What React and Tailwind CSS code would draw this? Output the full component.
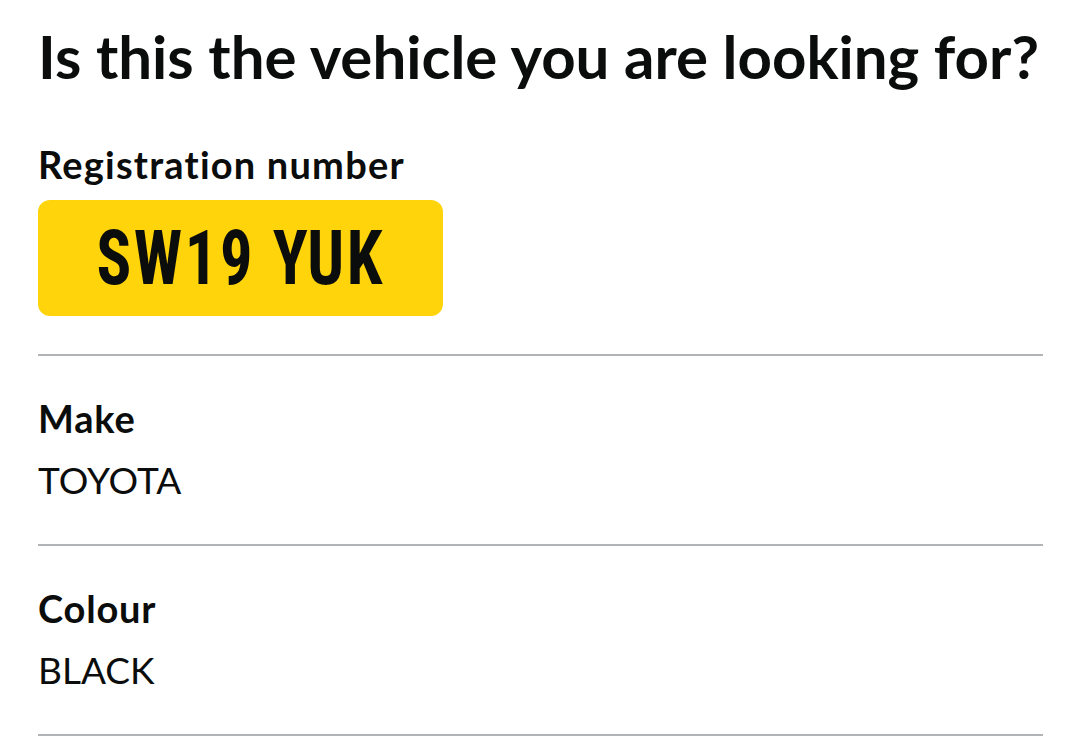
import React from "react";

const rows = [
    { label: "Make", value: "TOYOTA" },
    { label: "Colour", value: "BLACK" },
];

export default function App() {
    return (
        <div className="min-h-[745px] bg-white text-[#0b0c0c] font-['Lato',sans-serif] [font-variant-ligatures:none]">
            <div className="ml-[38px] w-[1005px] pt-[19px]">
                <h1 className="text-[60px] font-bold leading-[74px] whitespace-nowrap">
                    Is this the vehicle you are looking for?
                </h1>
                <div className="border-b-2 border-[#b1b4b6] pb-[38px]">
                    <div className="mt-[51px] text-[38px] font-bold leading-[40px] tracking-[1.2px]">Registration number</div>
                    <div className="mt-[16px] w-[405px] h-[116px] rounded-[12px] bg-[#ffd40a] flex items-center justify-center">
                        <span className="inline-block scale-x-[0.85] font-['Roboto_Condensed','DejaVu_Sans_Condensed',sans-serif] font-bold text-[76px] leading-none tracking-[3px]">
                            SW19 YUK
                        </span>
                    </div>
                </div>
                {rows.map((row) => (
                    <div key={row.label} className="border-b-2 border-[#b1b4b6] h-[190px] pt-[42px]">
                        <div className="text-[38px] font-bold leading-[40px] tracking-[0.8px]">{row.label}</div>
                        <div className="mt-[22px] text-[37px] leading-[40px]">{row.value}</div>
                    </div>
                ))}
            </div>
        </div>
    );
}
